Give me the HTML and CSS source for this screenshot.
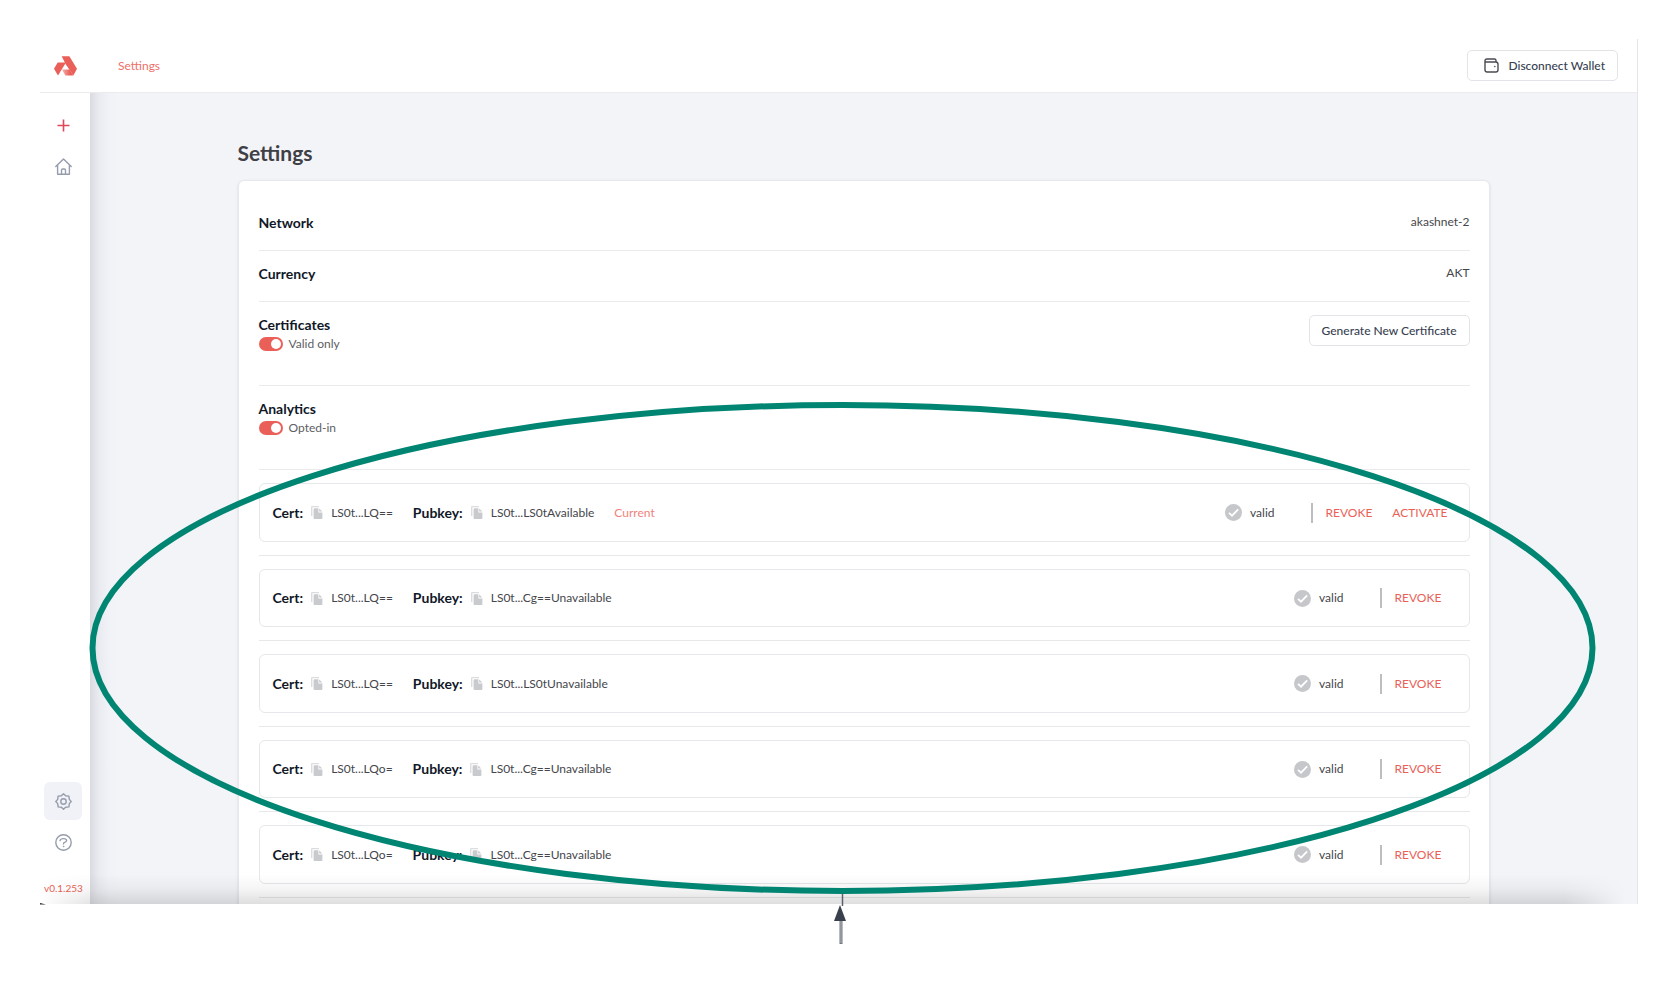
FILE: index.html
```html
<!DOCTYPE html>
<html lang="en">
<head>
<meta charset="utf-8">
<title>Settings</title>
<link rel="stylesheet" href="styles.css">
</head>
<body>
<svg class="symbols" aria-hidden="true">
  <symbol id="copy" viewBox="0 0 12 13">
    <path d="M0 1.2Q0 0 1.2 0H8V1.2H1.4V10H0Z" fill="#dcdde0"/>
    <path d="M2.6 3.2Q2.6 2.2 3.6 2.2H7.4V6.4H11.4V12Q11.4 13 10.4 13H3.6Q2.6 13 2.6 12Z" fill="#c9cacd"/>
    <path d="M8.2 2.4L11.3 5.6H8.2Z" fill="#c9cacd"/>
  </symbol>
  <symbol id="check" viewBox="0 0 17 17">
    <circle cx="8.5" cy="8.5" r="8.5" fill="#c6c7ca"/>
    <path d="M4 8.8L7 11.7L13.2 5.4" fill="none" stroke="#fff" stroke-width="1.8"/>
  </symbol>
</svg>

<div class="app">
  <header class="header">
    <a class="logo" href="#" aria-label="Home">
      <svg width="23" height="20" viewBox="0 0 69 59">
        <defs><linearGradient id="fade" x1="0" x2="1"><stop offset="0" stop-color="#f5b5b1"/><stop offset="0.7" stop-color="#ea5f58"/></linearGradient></defs>
        <path d="M23 0H46L69 38L58 58L46 40L35 24Z" fill="#ea5f58"/>
        <path d="M11 19H36L12 58L0 38Z" fill="#ea5f58"/>
        <path d="M24 40H47L58 58H34Z" fill="url(#fade)"/>
      </svg>
    </a>
    <a class="crumb" href="#">Settings</a>
    <button class="button wallet" type="button">
      <svg width="15" height="15" viewBox="0 0 15 15" fill="none" stroke="#4a4b52" stroke-width="1.4">
        <path d="M1 3.2V11.8Q1 14 3.2 14H11.8Q14 14 14 11.8V6.2Q14 4 11.8 4H2Q1 4 1 3Q1 1 3 1H10.4Q12 1 12 2.6V4"/>
        <circle cx="10.8" cy="8.6" r=".5" fill="#4a4b52" stroke-width=".6"/>
      </svg>
      Disconnect Wallet
    </button>
  </header>

  <div class="body">
    <nav class="sidebar" aria-label="Main">
      <a class="item" href="#" aria-label="New deployment">
        <svg width="13" height="13" viewBox="0 0 13 13"><path d="M6.5 .5V12.5M.5 6.5H12.5" stroke="#e0475a" stroke-width="1.6"/></svg>
      </a>
      <a class="item" href="#" aria-label="Dashboard">
        <svg width="17" height="17" viewBox="0 0 17 17" fill="none" stroke="#959cab" stroke-width="1.4" stroke-linejoin="round" stroke-linecap="round">
          <path d="M.8 8.4L8.5 .9L16.2 8.4M2.6 7V16.2H14.4V7M6.5 16V12.2Q6.5 11 7.7 11H9.3Q10.5 11 10.5 12.2V16"/>
        </svg>
      </a>
      <div class="spacer"></div>
      <a class="item active" href="#" aria-label="Settings">
        <svg width="17" height="17" viewBox="0 0 17 17" fill="none" stroke="#959cab" stroke-width="1.4" stroke-linejoin="round">
          <path d="M8.5 .8L10.6 2.7L13.9 3.1L14.3 6.4L16.2 8.5L14.3 10.6L13.9 13.9L10.6 14.3L8.5 16.2L6.4 14.3L3.1 13.9L2.7 10.6L.8 8.5L2.7 6.4L3.1 3.1L6.4 2.7Z"/>
          <circle cx="8.5" cy="8.5" r="2.7"/>
        </svg>
      </a>
      <a class="item" href="#" aria-label="Help">
        <svg width="17" height="17" viewBox="0 0 17 17" fill="none" stroke="#959cab" stroke-width="1.4" stroke-linecap="round">
          <circle cx="8.5" cy="8.5" r="7.7"/>
          <path d="M5 6.6Q5.4 4.6 8.4 4.6Q11.6 4.6 11.6 6.6Q11.6 8 9.6 8.4Q8.5 8.7 8.5 9.9"/>
          <circle cx="8.5" cy="12.4" r=".4" fill="#959cab" stroke-width=".8"/>
        </svg>
      </a>
      <span class="version">v0.1.253</span>
    </nav>

    <main class="main">
      <div class="content">
        <h1 class="title">Settings</h1>
        <section class="card">
          <div class="row">
            <h2 class="label">Network</h2>
            <span class="value">akashnet-2</span>
          </div>
          <div class="row">
            <h2 class="label">Currency</h2>
            <span class="value">AKT</span>
          </div>
          <div class="row tall">
            <div>
              <h2 class="label">Certificates</h2>
              <label class="switch"><input class="toggle" type="checkbox" checked>Valid only</label>
            </div>
            <button class="button" type="button">Generate New Certificate</button>
          </div>
          <div class="row tall">
            <div>
              <h2 class="label">Analytics</h2>
              <label class="switch"><input class="toggle" type="checkbox" checked>Opted-in</label>
            </div>
          </div>

          <ul class="certs">
            <li class="entry"><div class="cert">
              <b class="label">Cert:</b><svg class="copy"><use href="#copy"/></svg><span class="key">LS0t...LQ==</span>
              <b class="label">Pubkey:</b><svg class="copy"><use href="#copy"/></svg><span class="key">LS0t...LS0tAvailable</span>
              <span class="current">Current</span>
              <span class="status"><svg class="check"><use href="#check"/></svg>valid</span>
              <div class="actions"><button class="action" type="button">REVOKE</button><button class="action" type="button">ACTIVATE</button></div>
            </div></li>
            <li class="entry"><div class="cert">
              <b class="label">Cert:</b><svg class="copy"><use href="#copy"/></svg><span class="key">LS0t...LQ==</span>
              <b class="label">Pubkey:</b><svg class="copy"><use href="#copy"/></svg><span class="key">LS0t...Cg==Unavailable</span>
              <span class="status"><svg class="check"><use href="#check"/></svg>valid</span>
              <div class="actions"><button class="action" type="button">REVOKE</button></div>
            </div></li>
            <li class="entry"><div class="cert">
              <b class="label">Cert:</b><svg class="copy"><use href="#copy"/></svg><span class="key">LS0t...LQ==</span>
              <b class="label">Pubkey:</b><svg class="copy"><use href="#copy"/></svg><span class="key">LS0t...LS0tUnavailable</span>
              <span class="status"><svg class="check"><use href="#check"/></svg>valid</span>
              <div class="actions"><button class="action" type="button">REVOKE</button></div>
            </div></li>
            <li class="entry"><div class="cert">
              <b class="label">Cert:</b><svg class="copy"><use href="#copy"/></svg><span class="key">LS0t...LQo=</span>
              <b class="label">Pubkey:</b><svg class="copy"><use href="#copy"/></svg><span class="key">LS0t...Cg==Unavailable</span>
              <span class="status"><svg class="check"><use href="#check"/></svg>valid</span>
              <div class="actions"><button class="action" type="button">REVOKE</button></div>
            </div></li>
            <li class="entry"><div class="cert">
              <b class="label">Cert:</b><svg class="copy"><use href="#copy"/></svg><span class="key">LS0t...LQo=</span>
              <b class="label">Pubkey:</b><svg class="copy"><use href="#copy"/></svg><span class="key">LS0t...Cg==Unavailable</span>
              <span class="status"><svg class="check"><use href="#check"/></svg>valid</span>
              <div class="actions"><button class="action" type="button">REVOKE</button></div>
            </div></li>
          </ul>
        </section>
      </div>
    </main>
  </div>
  <div class="shade"></div>
</div>

<svg class="annotation" viewBox="0 0 1680 985" aria-hidden="true">
  <ellipse cx="842.5" cy="648" rx="750" ry="243" fill="none" stroke="#008573" stroke-width="6"/>
  <path d="M842.5 894V906" stroke="#5b626c" stroke-width="1.5"/>
  <path d="M841 920V944" stroke="#70777f" stroke-width="3"/>
  <path d="M841 921V943" stroke="#b4b8bd" stroke-width="1"/>
  <path d="M840 905L846 921H834Z" fill="#3a414d"/>
  <path d="M40 903L46 904.5H40Z" fill="#222"/>
</svg>
</body>
</html>
```
FILE: styles.css
```css
* { box-sizing: border-box; }

body {
  position: relative;
  display: flex;
  height: 100vh;
  margin: 0;
  padding: 39px 42px 81px 40px;
  background: #fff;
  color: #45464b;
  font: 12px/16px Lato, "Open Sans", sans-serif;
  overflow: hidden;
}

h1, h2, ul { margin: 0; padding: 0; }
a { text-decoration: none; }
svg { display: block; flex: none; }
button { font: inherit; cursor: pointer; }
.symbols { display: none; }

.app {
  position: relative;
  display: flex;
  flex: 1;
  flex-direction: column;
  border-right: 1px solid #e4e5e8;
  overflow: hidden;
}

.header {
  display: flex;
  flex: none;
  align-items: center;
  height: 54px;
  padding: 0 19px 0 14px;
  border-bottom: 1px solid #ebebed;
}

.crumb {
  margin-left: 41px;
  color: #ee6f69;
}

.button {
  display: flex;
  align-items: center;
  height: 31px;
  padding: 0 12px;
  border: 1px solid #e3e4e8;
  border-radius: 5px;
  background: #fff;
  color: #374151;
  font-weight: 500;
}

.wallet {
  gap: 9px;
  margin-left: auto;
  padding: 0 12px 0 16px;
}

.body {
  display: flex;
  flex: 1;
  min-height: 0;
}

.sidebar {
  display: flex;
  flex: none;
  flex-direction: column;
  gap: 3px;
  width: 50px;
  padding: 13px 8px 8px 4px;
  background: #fff;
}

.item {
  display: flex;
  align-items: center;
  justify-content: center;
  height: 38px;
  border-radius: 6px;
}

.active { background: #f1f2f8; }
.spacer { flex: 1; }

.version {
  margin-top: 16px;
  color: #ea5f58;
  font-size: 10px;
  text-align: center;
  white-space: nowrap;
}

.main {
  flex: 1;
  padding: 48px 24px 0;
  background: linear-gradient(90deg, #dadbe0 0, #e9eaef 8px, #f1f2f7 18px, #f3f4f8 28px);
  overflow: hidden;
}

.content {
  max-width: 1252px;
  margin: 0 auto;
}

.title {
  margin-bottom: 15px;
  color: #3f4045;
  font-size: 21px;
  font-weight: 700;
  line-height: 24px;
}

.card {
  padding: 19px 19px 20px 20px;
  border: 1px solid #e7e8ec;
  border-radius: 6px;
  background: #fff;
  box-shadow: 0 1px 3px rgba(0, 0, 0, 0.1);
}

.row {
  display: flex;
  align-items: flex-start;
  justify-content: space-between;
  min-height: 51px;
  padding-top: 13px;
  border-bottom: 1px solid #ebebed;
}

.tall {
  min-height: 84px;
}

.value { line-height: 18px; }

.label {
  color: #111827;
  font-size: 14px;
  font-weight: 700;
  line-height: 20px;
}

.switch {
  display: flex;
  align-items: center;
  gap: 6px;
  color: #5d5e63;
  line-height: 18px;
}

.toggle {
  width: 24px;
  height: 14px;
  margin: 0;
  padding: 2px;
  border-radius: 7px;
  background: #ea5f58;
  appearance: none;
}

.toggle::before {
  display: block;
  width: 10px;
  height: 10px;
  border-radius: 5px;
  background: #fff;
  content: "";
}

.toggle:checked::before { margin-left: auto; }

.certs { list-style: none; }

.entry {
  padding: 13px 0;
  border-bottom: 1px solid #e8e8ea;
}

.cert {
  display: flex;
  align-items: center;
  min-height: 59px;
  padding: 0 21px 0 13px;
  border: 1px solid #e6e7ea;
  border-radius: 6px;
}

.entry:nth-child(even) .cert { min-height: 58px; }

.copy {
  width: 12px;
  height: 13px;
  margin: 0 8px;
}

.key { margin-right: 20px; }
.current { color: #f0827d; }

.status {
  display: flex;
  align-items: center;
  gap: 8px;
  margin-left: auto;
}

.check {
  width: 17px;
  height: 17px;
}

.actions {
  display: flex;
  align-items: center;
  gap: 20px;
  height: 20px;
  margin-left: 36px;
  padding-left: 13px;
  border-left: 2px solid #bdbec1;
}

.action {
  padding: 0;
  border: 0;
  background: none;
  color: #ea5f58;
}

.action:last-child {
  min-width: 53px;
  text-align: left;
}

/* soft shadow along the lower edge of the window */
.shade {
  position: absolute;
  right: 12px;
  bottom: 0;
  left: 0;
  height: 30px;
  background: linear-gradient(rgba(0, 0, 0, 0), rgba(0, 0, 0, 0.04) 50%, rgba(0, 0, 0, 0.13));
  mask-image: linear-gradient(90deg, transparent, #000 60px, #000 calc(100% - 60px), transparent);
  pointer-events: none;
}

.annotation {
  position: absolute;
  inset: 0;
  width: 100%;
  height: 100%;
  pointer-events: none;
}
```
